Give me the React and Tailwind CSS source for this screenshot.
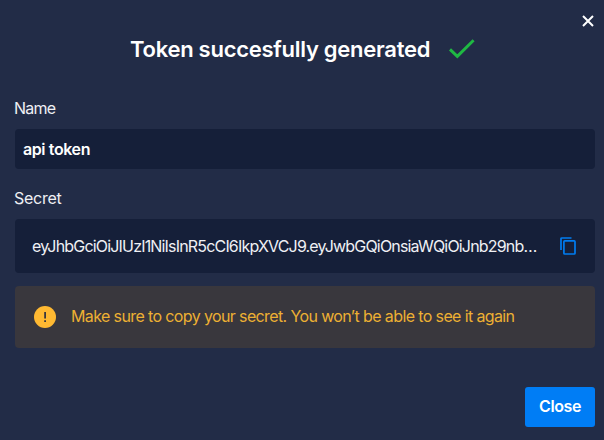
function CloseIcon() {
  return (
    <svg width="12" height="12" viewBox="0 0 12 12" fill="none" stroke="#fff" strokeWidth="2">
      <path d="M1 1 11 11M11 1 1 11" />
    </svg>
  );
}

function CheckIcon() {
  return (
    <svg width="26" height="20" viewBox="0 0 26 20" fill="none" stroke="#1fb843" strokeWidth="2.9">
      <path d="M1 10.4 8.3 17.4 24.6 1.200" />
    </svg>
  );
}

function CopyIcon() {
  return (
    <svg width="16" height="18" viewBox="0 0 16 18" fill="none" stroke="#007cf0" strokeWidth="1.7">
      <path d="M1 13V1.900Q1 1 1.900 1H11.500" />
      <rect x="3.900" y="3.900" width="11.100" height="13.100" rx=".8" />
    </svg>
  );
}

function WarningIcon() {
  return (
    <svg width="22" height="22" viewBox="0 0 22 22">
      <circle cx="11" cy="11" r="11" fill="#ffb932" />
      <path d="M10.200 6h1.800v6.500h-1.800zM10.200 14.200h1.800V16h-1.800z" fill="#39373d" />
    </svg>
  );
}

export default function App() {
  return (
    <main className="flex h-[440px] w-[604px] flex-col bg-[#222c47] pr-[9px] pl-[15px] font-['Inter',sans-serif] text-base text-white">
      <div className="flex h-[34px] justify-end pt-[15px] pr-[1px]">
        <button aria-label="Close dialog" className="h-3"><CloseIcon /></button>
      </div>
      <header className="flex h-[30px] items-center pl-[115px]">
        <h1 className="w-[319px] text-[22px] font-semibold tracking-[-0.27px] whitespace-nowrap">Token succesfully generated</h1>
        <CheckIcon />
      </header>
      <label className="mt-[32px] -ml-px h-[33px] leading-6 tracking-[-0.8px] text-[#eff0f4]">Name</label>
      <div className="flex h-10 items-center rounded bg-[#151f39] px-2 font-semibold tracking-[-0.4px]">api token</div>
      <label className="mt-[17px] -ml-px h-[33px] leading-6 tracking-[-0.25px] text-[#eff0f4]">Secret</label>
      <div className="flex h-[54px] items-center rounded bg-[#151f39] pr-[19px] pl-[17px] text-[#eff0f4]">
        <span className="min-w-0 flex-1 tracking-[-0.82px] whitespace-nowrap">eyJhbGciOiJIUzI1NiIsInR5cCI6IkpXVCJ9.eyJwbGQiOnsiaWQiOiJnb29nb…</span>
        <CopyIcon />
      </div>
      <div className="mt-[13px] flex h-[62px] items-center gap-[15px] rounded bg-[#39373d] pl-[19px] text-[#edb033]">
        <WarningIcon />
        <span className="pb-0.5 tracking-[-0.62px] whitespace-nowrap">Make sure to copy your secret. You won’t be able to see it again</span>
      </div>
      <button className="mt-[39px] h-10 w-[70px] self-end rounded-[3px] bg-[#007df5] pb-0.5 font-semibold tracking-[-0.4px]">Close</button>
    </main>
  );
}
